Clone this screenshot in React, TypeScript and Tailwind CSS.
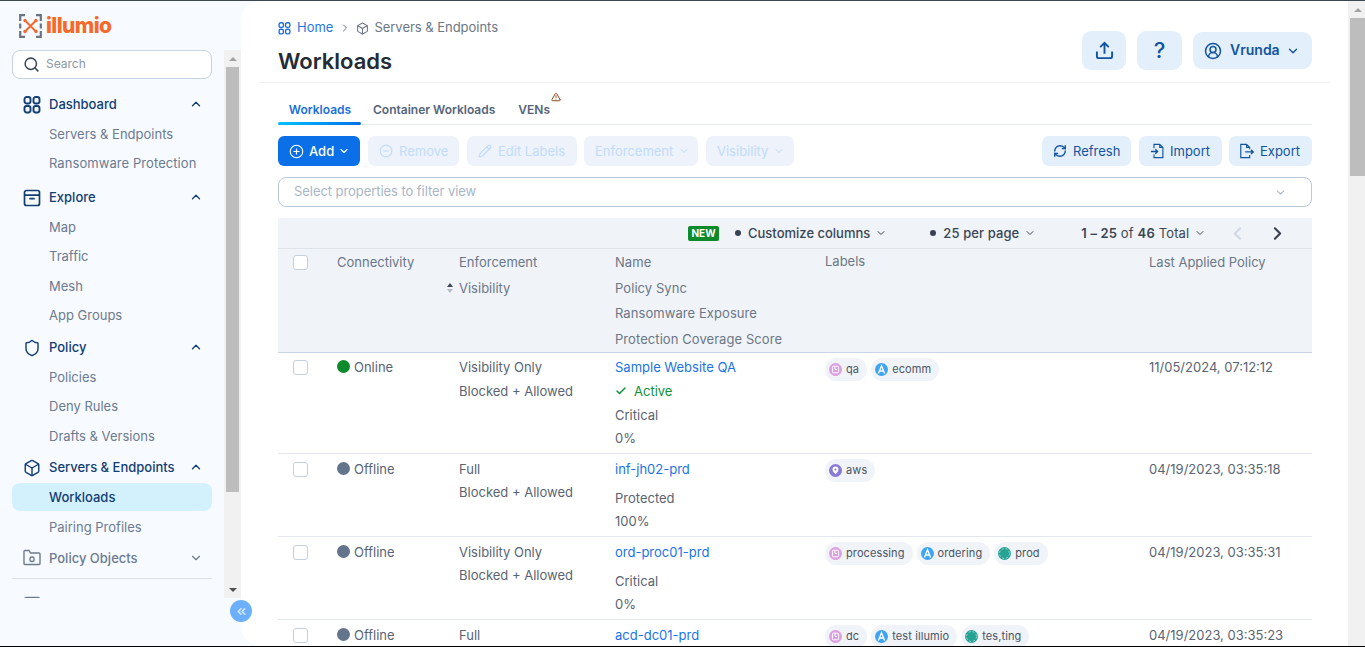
import { Box, Check, ChevronDown, ChevronLeft, ChevronRight, ChevronUp, ChevronsLeft, CircleMinus, CirclePlus, CircleUserRound, Pencil, RefreshCw, Search, Shield, TriangleAlert } from 'lucide-react';

const DashIcon = ({ className }: { className?: string }) => (
  <svg viewBox="0 0 18 18" fill="none" stroke="currentColor" strokeWidth="1.900" className={className}>
    <rect x="1.500" y="1" width="6" height="6.500" rx="2.200" />
    <rect x="10.500" y="1" width="6" height="6.500" rx="2.200" />
    <rect x="1.500" y="10" width="6" height="6.500" rx="2.200" />
    <rect x="10.500" y="10" width="6" height="6.500" rx="2.200" />
  </svg>
);

const ExploreIcon = ({ className }: { className?: string }) => (
  <svg viewBox="0 0 18 18" fill="none" stroke="currentColor" strokeWidth="1.700" className={className}>
    <path d="M1.500 6.200V3.500a2 2 0 0 1 2-2h11a2 2 0 0 1 2 2v2.700zM1.500 6.200v8.300a2 2 0 0 0 2 2h11a2 2 0 0 0 2-2V6.200" />
    <path d="M7 9.700h4" strokeLinecap="round" />
  </svg>
);

const FolderLockIcon = ({ className }: { className?: string }) => (
  <svg viewBox="0 0 18 18" fill="none" stroke="currentColor" strokeWidth="1.400" className={className}>
    <path d="M1 14.500v-12a1 1 0 0 1 1-1h4l1.500 2.500h8.500a1 1 0 0 1 1 1v9.500a1 1 0 0 1-1 1H2a1 1 0 0 1-1-1z" />
    <rect x="7" y="8" width="4" height="4.500" rx="1.500" />
  </svg>
);

const UploadIcon = ({ className }: { className?: string }) => (
  <svg viewBox="0 0 20 20" fill="none" stroke="currentColor" strokeWidth="2" className={className}>
    <path d="M10 13.500V2.500M5.500 6.500 10 2l4.500 4.500" />
    <path d="M2 11v5a2 2 0 0 0 2 2h12a2 2 0 0 0 2-2v-5" />
  </svg>
);

const ImportIcon = ({ className }: { className?: string }) => (
  <svg viewBox="0 0 18 18" fill="none" stroke="currentColor" strokeWidth="1.300" className={className}>
    <path d="M4.500 6V1.500h6.500l3.500 3.500v11.500h-10V13M11 1.500V5h3.500" />
    <path d="M1 9.500h7M6 7l2.500 2.500L6 12" strokeWidth="1.600" />
  </svg>
);

const ExportIcon = ({ className }: { className?: string }) => (
  <svg viewBox="0 0 18 18" fill="none" stroke="currentColor" strokeWidth="1.300" className={className}>
    <path d="M12 7V5L8.500 1.500H2v15h10v-3M8.500 1.500V5H12" />
    <path d="M7 10h9M13.500 7.500 16 10l-2.500 2.500" strokeWidth="1.600" />
  </svg>
);

const subItem = 'flex h-[29.5px] items-center pl-[37px] text-[13px] text-[#6c7b91]';

function NavHead({ icon, label, open = true, muted = false }: { icon: React.ReactNode; label: string; open?: boolean; muted?: boolean }) {
  return (
    <div className={`flex h-[30px] items-center ${muted ? 'text-[#6c7b91]' : 'text-[#123e74]'}`}>
      <span className="flex w-[37px] shrink-0 pl-[11px]">{icon}</span>
      <span className="flex-1 text-[13px] font-medium">{label}</span>
      {open ? <ChevronUp className="mr-[9px] -mt-[1px] h-[14px] w-[14px]" strokeWidth={2.200} /> : <ChevronDown className="mr-[9px] h-[14px] w-[14px]" strokeWidth={2} />}
    </div>
  );
}

function Sidebar() {
  return (
    <aside className="relative flex w-[241px] shrink-0 flex-col">
      <div className="flex h-[49px] items-start pl-[19px] pt-[13px]">
        <svg viewBox="0 0 23 24" className="h-[24px] w-[23px]" fill="none">
          <path d="M6 1.200H1.200V7M17 1.200h4.800V7M1.200 17v5.800H6M21.800 17v5.800H17" stroke="#6b7280" strokeWidth="2.200" />
          <path d="M1.200 9.500v5M21.800 9.500v5" stroke="#6b7280" strokeWidth="2.200" />
          <path d="M6.500 7 16.500 17M16.500 7 6.500 17" stroke="#f26a2e" strokeWidth="2" />
          <circle cx="6" cy="6.500" r="1.700" fill="#f26a2e" />
          <circle cx="17" cy="6.500" r="1.700" fill="#f26a2e" />
          <circle cx="6" cy="17.500" r="1.700" fill="#f26a2e" />
          <circle cx="17" cy="17.500" r="1.700" fill="#f26a2e" />
        </svg>
        <span className="-mt-[3px] ml-[4px] text-[21px] leading-[29px] font-extrabold tracking-[-0.600px] text-[#f56a2a]">illumio</span>
      </div>
      <div className="flex h-[548px] items-stretch">
        <nav className="w-[224px] shrink-0 overflow-hidden pl-[12px] pr-[12px]">
          <div className="flex h-[29px] items-center rounded-[8px] border border-[#c5d3e2] bg-white pl-[10px]">
            <Search className="h-[17px] w-[17px] text-[#3a4a5c]" strokeWidth={2.200} />
            <span className="ml-[6px] -mt-[2px] text-[12px] text-[#8b98a8]">Search</span>
          </div>
          <div className="mt-[10.700px]">
            <NavHead label="Dashboard" icon={<DashIcon className="h-[18px] w-[18px]" />} />
            <div className={subItem}>Servers & Endpoints</div>
            <div className={`${subItem} tracking-[0.070px]`}>Ransomware Protection</div>
            <div className="h-[4px]" />
            <NavHead label="Explore" icon={<ExploreIcon className="h-[18px] w-[18px]" />} />
            <div className={subItem}>Map</div>
            <div className={subItem}>Traffic</div>
            <div className={subItem}>Mesh</div>
            <div className={subItem}>App Groups</div>
            <div className="h-[2px]" />
            <NavHead label="Policy" icon={<Shield className="h-[18px] w-[18px]" strokeWidth={1.900} />} />
            <div className={subItem}>Policies</div>
            <div className={subItem}>Deny Rules</div>
            <div className={subItem}>Drafts & Versions</div>
            <div className="h-[1.500px]" />
            <NavHead label="Servers & Endpoints" icon={<Box className="h-[18px] w-[18px]" strokeWidth={1.900} />} />
            <div className="mt-[0.800px] flex h-[28px] items-center rounded-[8px] bg-[#d2f1fd] pl-[37px] text-[13px] font-medium text-[#123e74]">Workloads</div>
            <div className="flex h-[32px] items-center pl-[37px] text-[13px] text-[#6c7b91]">Pairing Profiles</div>
            <NavHead muted open={false} label="Policy Objects" icon={<FolderLockIcon className="h-[18px] w-[18px]" />} />
            <div className="mt-[4.500px] h-px bg-[#dde2e9]" />
            <div className="mt-[17px] pl-[11px] text-[#6c7b91]"><ExploreIcon className="h-[18px] w-[18px]" /></div>
          </div>
        </nav>
        <div className="flex w-[17px] flex-col bg-[#f1f1f1] px-[2px]">
          <div className="flex h-[17px] items-center justify-center">
            <span className="border-x-[4px] border-b-[4px] border-x-transparent border-b-[#a3a3a3]" />
          </div>
          <div className="h-[425px] bg-[#bdbdbd]" />
          <div className="flex-1" />
          <div className="flex h-[17px] items-center justify-center">
            <span className="border-x-[4px] border-t-[4px] border-x-transparent border-t-[#505050]" />
          </div>
        </div>
      </div>
      <div className="absolute left-[230px] top-[599px] z-10 flex h-[22px] w-[22px] items-center justify-center rounded-full bg-[#6cb0fb]">
        <ChevronsLeft className="h-[13px] w-[13px] text-[#d5e8ff]" strokeWidth={3} />
      </div>
    </aside>
  );
}

function Toolbar() {
  const off = 'flex h-[30px] items-center rounded-[7px] bg-[#edf2fb] text-[13px] text-[#c1dcf8]';
  const act = 'flex h-[30px] items-center rounded-[7px] bg-[#e3f0fc] text-[13px] text-[#14549f]';
  return (
    <div className="mt-[11px] flex">
      <div className="flex h-[30px] w-[82px] items-center rounded-[6px] bg-[#0b6fe8] pl-[11px] text-[13px] font-medium text-white">
        <CirclePlus className="h-[15px] w-[15px]" strokeWidth={1.800} />
        <span className="ml-[5px] pt-px">Add</span>
        <ChevronDown className="ml-[4px] h-[12px] w-[12px]" strokeWidth={2.200} />
      </div>
      <div className={`${off} ml-[8px] w-[91px] pl-[11px]`}><CircleMinus className="h-[14px] w-[14px]" /><span className="ml-[6px] pt-px">Remove</span></div>
      <div className={`${off} ml-[8px] w-[110px] pl-[11px]`}><Pencil className="h-[14px] w-[14px]" /><span className="ml-[6px] pt-px">Edit Labels</span></div>
      <div className={`${off} ml-[7px] w-[114px] pl-[11px]`}><span className="pt-px">Enforcement</span><ChevronDown className="ml-[5px] h-[12px] w-[12px]" /></div>
      <div className={`${off} ml-[8px] w-[88px] pl-[11px]`}><span className="pt-px">Visibility</span><ChevronDown className="ml-[5px] h-[12px] w-[12px]" /></div>
      <div className={`${act} ml-auto w-[89px] pl-[11px]`}><RefreshCw className="h-[14px] w-[14px]" strokeWidth={2.400} /><span className="ml-[6px] pt-px">Refresh</span></div>
      <div className={`${act} ml-[8px] w-[83px] pl-[11px]`}><ImportIcon className="h-[16px] w-[16px]" /><span className="ml-[4px] pt-px">Import</span></div>
      <div className={`${act} ml-[7px] w-[83px] pl-[10px]`}><ExportIcon className="h-[16px] w-[16px]" /><span className="ml-[5px] pt-px">Export</span></div>
    </div>
  );
}

function LabelIcon({ kind }: { kind: 'role' | 'app' | 'loc' | 'env' }) {
  if (kind === 'role')
    return (
      <svg viewBox="0 0 13 13" className="h-[13px] w-[13px] shrink-0">
        <circle cx="6.500" cy="6.500" r="6.500" fill="#dc9fe2" />
        <rect x="3.400" y="3.200" width="6.200" height="6.600" rx="1" fill="none" stroke="#fff" strokeWidth="1" />
        <path d="M6 3.500v3h2" fill="none" stroke="#fff" strokeWidth="1" />
      </svg>
    );
  if (kind === 'app')
    return (
      <svg viewBox="0 0 13 13" className="h-[13px] w-[13px] shrink-0">
        <circle cx="6.500" cy="6.500" r="6.500" fill="#3ea4f5" />
        <path d="M3.400 10.500 6.500 2.800l3.100 7.700M5 8h3" fill="none" stroke="#fff" strokeWidth="1.300" />
      </svg>
    );
  if (kind === 'loc')
    return (
      <svg viewBox="0 0 13 13" className="h-[13px] w-[13px] shrink-0">
        <circle cx="6.500" cy="6.500" r="6.500" fill="#8a78d6" />
        <path d="M6.500 2.600a3 3 0 0 0-3 3c0 2 3 4.800 3 4.800s3-2.800 3-4.800a3 3 0 0 0-3-3z" fill="#fff" />
        <circle cx="6.500" cy="5.600" r="1" fill="#8a78d6" />
      </svg>
    );
  return (
    <svg viewBox="0 0 13 13" className="h-[13px] w-[13px] shrink-0">
      <circle cx="6.500" cy="6.500" r="6.500" fill="#27a396" />
      <circle cx="6.500" cy="6.500" r="5" fill="none" stroke="#c6e9e5" strokeWidth="0.700" strokeDasharray="2 2" />
    </svg>
  );
}

function Chip({ kind, text }: { kind: 'role' | 'app' | 'loc' | 'env'; text: string }) {
  return (
    <span className="flex h-[23px] items-center gap-[4px] rounded-full bg-[#f0f3f7] pl-[4px] pr-[8px] text-[11px] tracking-[0.100px] text-[#4b5563]">
      <LabelIcon kind={kind} />
      <span className="-mt-px">{text}</span>
    </span>
  );
}

type Row = {
  h: string;
  pt: string;
  online: boolean;
  enf: string;
  name: string;
  active?: boolean;
  risk: string;
  pct: string;
  labels: [ 'role' | 'app' | 'loc' | 'env', string ][];
  date: string;
};

const rows: Row[] = [
  { h: 'h-[101px]', pt: 'pt-[2px]', online: true, enf: 'Visibility Only', name: 'Sample Website QA', active: true, risk: 'Critical', pct: '0%', labels: [['role', 'qa'], ['app', 'ecomm']], date: '11/05/2024, 07:12:12' },
  { h: 'h-[83px]', pt: 'pt-[3px]', online: false, enf: 'Full', name: 'inf-jh02-prd', risk: 'Protected', pct: '100%', labels: [['loc', 'aws']], date: '04/19/2023, 03:35:18' },
  { h: 'h-[83px]', pt: 'pt-[3px]', online: false, enf: 'Visibility Only', name: 'ord-proc01-prd', risk: 'Critical', pct: '0%', labels: [['role', 'processing'], ['app', 'ordering'], ['env', 'prod']], date: '04/19/2023, 03:35:31' },
  { h: 'h-[83px]', pt: 'pt-[3px]', online: false, enf: 'Full', name: 'acd-dc01-prd', risk: 'Protected', pct: '100%', labels: [['role', 'dc'], ['app', 'test illumio'], ['env', 'tes,ting']], date: '04/19/2023, 03:35:23' },
];

const columns = 'grid grid-cols-[59px_122px_156px_210px_324px_163px]';
const checkbox = 'ml-[15px] h-[15px] w-[15px] rounded-[3px] border border-[#c3d0e0] bg-white';

function Table() {
  return (
    <div className="mt-[11px] text-[13px]">
      <div className="flex h-[31px] items-center border-b border-[#dfe4ea] bg-[#f0f3f7] pl-[410px] text-[#3b4654]">
        <span className="flex h-[15px] w-[31px] items-center justify-center rounded-[2px] bg-[#0c8a2c] text-[10px] font-bold text-white">NEW</span>
        <span className="ml-[16px] h-[6px] w-[6px] rounded-full bg-[#374151]" />
        <span className="ml-[7px] pt-px [font-weight:450]">Customize columns</span>
        <ChevronDown className="ml-[5px] h-[12px] w-[12px]" strokeWidth={2} />
        <span className="ml-[43px] h-[6px] w-[6px] rounded-full bg-[#374151]" />
        <span className="ml-[7px] pt-px tracking-[0.100px] [font-weight:450]">25 per page</span>
        <ChevronDown className="ml-[5px] h-[12px] w-[12px]" strokeWidth={2} />
        <span className="ml-[45px] pt-px tracking-[0.150px]"><b className="font-semibold">1 – 25</b> of <b className="font-semibold">46</b> Total</span>
        <ChevronDown className="ml-[5px] h-[12px] w-[12px]" strokeWidth={2} />
        <ChevronLeft className="ml-[21px] h-[21px] w-[21px] text-[#cfd8e3]" strokeWidth={2.400} />
        <ChevronRight className="ml-[19px] h-[21px] w-[21px] text-[#374151]" strokeWidth={2.400} />
      </div>
      <div className={`${columns} h-[104px] border-b border-[#c9d6e8] bg-[#f0f3f7] text-[#6b7788]`}>
        <div className="pt-[6px]"><div className={checkbox} /></div>
        <div className="leading-[26px]">Connectivity</div>
        <div className="relative leading-[26px]">
          <div>Enforcement</div>
          <div>Visibility</div>
          <span className="absolute -left-[12px] top-[34px] flex flex-col gap-[2px]">
            <span className="border-x-[3.500px] border-b-[4px] border-x-transparent border-b-[#3b4654]" />
            <span className="border-x-[3.500px] border-t-[4px] border-x-transparent border-t-[#b4bdc9]" />
          </span>
        </div>
        <div className="pt-px leading-[25.700px] tracking-[0.070px]">
          <div>Name</div>
          <div>Policy Sync</div>
          <div>Ransomware Exposure</div>
          <div>Protection Coverage Score</div>
        </div>
        <div className="-mt-px leading-[26px]">Labels</div>
        <div className="leading-[26px]">Last Applied Policy</div>
      </div>
      {rows.map((r) => (
        <div key={r.name} className={`${columns} ${r.h} border-b border-[#e3e7ef] leading-[24px] text-[#5a6472]`}>
          <div className={r.pt}><div className={`${checkbox} mt-[5px]`} /></div>
          <div className={`${r.pt} flex items-start`}>
            <span className={`mt-[5px] h-[13px] w-[13px] rounded-full ${r.online ? 'bg-[#0c8a2c]' : 'bg-[#64748b]'}`} />
            <span className="ml-[4px]">{r.online ? 'Online' : 'Offline'}</span>
          </div>
          <div className={r.pt}>
            <div>{r.enf}</div>
            <div className={r.active ? '' : '-mt-px'}>Blocked + Allowed</div>
          </div>
          <div className={r.pt}>
            <div className="text-[#1a73e8]">{r.name}</div>
            {r.active && (
              <div className="flex items-center text-[#0f9138]">
                <Check className="h-[12px] w-[12px]" strokeWidth={3} />
                <span className="ml-[7px]">Active</span>
              </div>
            )}
            <div className={r.active ? '' : 'mt-[5px]'}>{r.risk}</div>
            <div className="-mt-[1px]">{r.pct}</div>
          </div>
          <div className="flex items-start gap-[4px] pt-[5px]">
            {r.labels.map(([k, t]) => <Chip key={t} kind={k} text={t} />)}
          </div>
          <div className={r.pt}>{r.date}</div>
        </div>
      ))}
    </div>
  );
}

export default function App() {
  return (
    <div className="flex h-screen flex-col overflow-hidden bg-[#f7fafe] font-[Inter,sans-serif]">
      <div className="h-px shrink-0 bg-[#3c4650]" />
      <div className="flex min-h-0 flex-1">
        <Sidebar />
        <main className="min-w-0 flex-1 overflow-hidden rounded-l-[20px] bg-white pl-[37px] pr-[36px]">
          <div className="relative -mx-[18px] flex h-[82px] justify-between border-b border-[#f0f1f3] px-[18px]">
            <div>
              <div className="mt-[18px] flex h-[18px] items-center text-[13px]">
                <DashIcon className="h-[13px] w-[13px] text-[#1a6fdc]" />
                <span className="ml-[6px] text-[#2a77dc]">Home</span>
                <ChevronRight className="ml-[6px] h-[12px] w-[12px] text-[#6b7788]" />
                <Box className="ml-[5px] h-[13px] w-[13px] text-[#6b7788]" />
                <span className="ml-[5px] text-[#6b7788] tracking-[-0.030px]">Servers & Endpoints</span>
              </div>
              <h1 className="mt-[9px] text-[22px] leading-[30px] font-semibold text-[#232b35]">Workloads</h1>
            </div>
            <div className="mt-[30px] flex items-start">
              <div className="flex h-[39px] w-[44px] items-center justify-center rounded-[9px] bg-[#e3f0fc] text-[#14549f]"><UploadIcon className="h-[19px] w-[19px]" /></div>
              <div className="ml-[11px] flex h-[39px] w-[45px] items-center justify-center rounded-[9px] bg-[#e3f0fc] text-[22px] font-medium text-[#14549f]">?</div>
              <div className="ml-[11px] mt-px flex h-[37px] w-[119px] items-center rounded-[9px] bg-[#e3f0fc] pl-[11px] text-[#14549f]">
                <CircleUserRound className="h-[18px] w-[18px]" strokeWidth={2} />
                <span className="ml-[8px] -mt-[2px] text-[14px] font-semibold">Vrunda</span>
                <ChevronDown className="ml-[6px] h-[14px] w-[14px]" strokeWidth={2.400} />
              </div>
            </div>
          </div>
          <div className="flex h-[42px] items-end border-b border-[#e5eaf1] text-[12px] font-semibold text-[#56657a]">
            <div className="-mb-px flex h-[28px] w-[83px] flex-col items-center text-[#1a6fdc]">
              <span className="mt-[4px] flex-1 pl-px">Workloads</span>
              <span className="h-[3px] w-full rounded-full bg-linear-to-r from-[#00c2ff] to-[#0b6fe8]" />
            </div>
            <div className="flex h-[27px] items-start px-[12px]"><span className="mt-[4px]">Container Workloads</span></div>
            <div className="relative flex h-[27px] items-start pl-[11px] pr-[10px]">
              <span className="mt-[4px]">VENs</span>
              <TriangleAlert className="absolute right-[-1px] top-[-5px] h-[10px] w-[10px] text-[#8a4b1f]" strokeWidth={2.400} />
            </div>
          </div>
          <Toolbar />
          <div className="mt-[11px] flex h-[30px] items-center justify-between rounded-[8px] border border-[#b8c8dc] pl-[15px] pr-[24px] text-[13px] tracking-[-0.060px] text-[#a9b6c6]">
            Select properties to filter view
            <ChevronDown className="h-[13px] w-[13px]" />
          </div>
          <Table />
        </main>
        <div className="flex w-[17px] shrink-0 flex-col bg-[#f1f1f1] pl-[2px]">
          <div className="flex h-[17px] items-center justify-center">
            <span className="border-x-[4px] border-b-[4px] border-x-transparent border-b-[#a3a3a3]" />
          </div>
          <div className="h-[158px] bg-[#bdbdbd]" />
        </div>
      </div>
      <div className="h-px shrink-0 bg-black" />
    </div>
  );
}
